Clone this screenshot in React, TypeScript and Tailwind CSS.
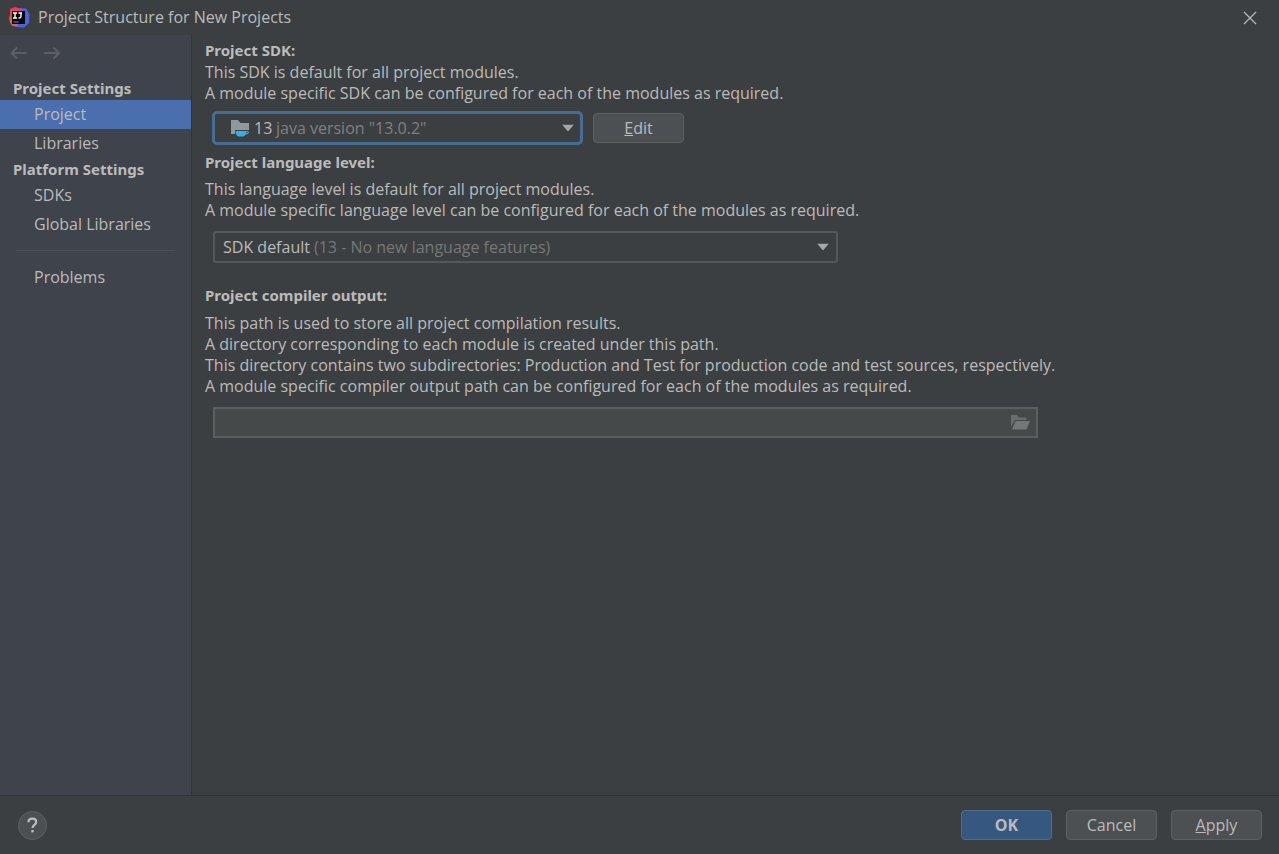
import React, { useState } from "react";

const HelpIcon = () => (
  <svg width="13" height="17" viewBox="0 0 13 17" fill="none" aria-hidden="true">
    <path
      d="M2.500 5.200C2.500 2.900 4.100 1.700 6.300 1.700s3.900 1.200 3.900 3.200c0 2.900-3.700 2.900-3.700 6"
      stroke="#bbbdbf"
      strokeWidth="2.2"
    />
    <rect x="5.3" y="13" width="2.4" height="2.4" fill="#bbbdbf" />
  </svg>
);

const Logo = () => (
  <svg width="22" height="22" viewBox="0 0 22 22" aria-hidden="true">
    <defs>
      <linearGradient id="logo-left" x1="0" y1="0" x2="0" y2="1">
        <stop offset="0" stopColor="#f0346b" />
        <stop offset="0.55" stopColor="#e8503f" />
        <stop offset="0.8" stopColor="#e8763a" />
        <stop offset="1" stopColor="#b94fa8" />
      </linearGradient>
      <linearGradient id="logo-right" x1="0" y1="0" x2="1" y2="1">
        <stop offset="0" stopColor="#a03fc8" />
        <stop offset="0.4" stopColor="#4a62e0" />
        <stop offset="1" stopColor="#5a5fd8" />
      </linearGradient>
    </defs>
    <path d="M11 1l7 .5L21.500 7 21 16l-5 4.500-9-.5 3-9z" fill="url(#logo-right)" />
    <path d="M2 2l5-2 6 2 1 4-5 13.500-5-.5-2-4-1-4 1-3z" fill="url(#logo-left)" />
    <rect x="4" y="4" width="13" height="13" fill="#09070a" />
    <path
      d="M5 6h4M7 6v5M5 11h4M10.500 6h3.500M13 6v3.600c0 1-.7 1.400-1.500 1.400h-1"
      stroke="#fff"
      strokeWidth="1.4"
      fill="none"
    />
    <path d="M5.500 15h5" stroke="#8a8a8a" strokeWidth="1" />
  </svg>
);

const Arrow = ({ back }: { back?: boolean }) => (
  <svg width="18" height="14" viewBox="0 0 18 14" fill="none" aria-hidden="true">
    <path
      d={back ? "M17.500 7H2.500M8 1.500L2.500 7 8 12.500" : "M1 7h15M10.500 1.500L16 7l-5.500 5.500"}
      stroke="#5c5f64"
      strokeWidth="2"
    />
  </svg>
);

const JdkIcon = () => (
  <svg width="20" height="18" viewBox="0 0 20 18" aria-hidden="true">
    <path d="M1 1h7l2.500 3H19v7H5v4H1z" fill="#8f999f" />
    <path d="M5.500 12h11c3.400 0 3.200 3.400-.8 3.400-.8 1.400-2 2.100-3.500 2.100H9.500c-2.500 0-4-2-4-5.500z" fill="#35b0e2" />
    <path d="M16.300 13h.9c.8 0 .6 1.300-.9 1.300z" fill="#3c3f41" />
  </svg>
);

const FolderIcon = () => (
  <svg width="19" height="15" viewBox="0 0 19 15" aria-hidden="true">
    <path d="M0 12V0h6l2 2.500h7.500V5H4z" fill="#696d6f" />
    <path d="M4.700 6H19l-3.500 8.500H1z" fill="#73777a" />
  </svg>
);

const Caret = () => (
  <svg
    className="pointer-events-none absolute right-[9px] top-1/2 -translate-y-1/2"
    width="12"
    height="7"
    viewBox="0 0 12 7"
    aria-hidden="true"
  >
    <path d="M0 0h12L6 7z" fill="#a5a7a9" />
  </svg>
);

const menu = [
  { title: "Project Settings", items: ["Project", "Libraries"] },
  { title: "Platform Settings", items: ["SDKs", "Global Libraries"] },
];

type NavItemProps = {
  label: string;
  active: boolean;
  onClick: () => void;
};

const NavItem = ({ label, active, onClick }: NavItemProps) => (
  <button
    onClick={onClick}
    className={`flex h-[29px] w-full items-center pl-[34px] text-left ${
      active ? "bg-[#4b6eaf]" : ""
    }`}
  >
    {label}
  </button>
);

const headingStyle = "block font-['Noto_Sans',sans-serif] text-[15px] font-bold";

const buttonStyle =
  "flex h-[30px] w-[91px] items-center justify-center rounded-[4px] border";

const App = () => {
  const [selected, setSelected] = useState("Project");
  const [output, setOutput] = useState("");

  return (
    <div className="flex min-h-screen flex-col bg-[#3c3f41] font-['Open_Sans',sans-serif] text-[16px] leading-[21px] text-[#bbbbbb]">
      {/* title bar */}
      <header className="flex h-[35px] items-center gap-2 pl-2 pr-[22px]">
        <Logo />
        <h1 className="flex-1">Project Structure for New Projects</h1>
        <button aria-label="Close">
          <svg width="14" height="14" viewBox="0 0 14 14" aria-hidden="true">
            <path d="M1 1l12 12M13 1L1 13" stroke="#b5b7b8" strokeWidth="1.300" />
          </svg>
        </button>
      </header>

      <div className="flex flex-1">
        <nav className="w-48 shrink-0 border-r border-[#313335] bg-[#3f434c]">
          <div className="flex h-[42px] items-start gap-4 pl-[9px] pt-[11px]">
            <button aria-label="Back">
              <Arrow back />
            </button>
            <button aria-label="Forward">
              <Arrow />
            </button>
          </div>
          {menu.map(({ title, items }) => (
            <div key={title}>
              <h2 className={`${headingStyle} h-[23px] pl-[13px] leading-[23px]`}>{title}</h2>
              {items.map((label) => (
                <NavItem
                  key={label}
                  label={label}
                  active={selected === label}
                  onClick={() => setSelected(label)}
                />
              ))}
            </div>
          ))}
          <hr className="mx-4 mb-3 mt-[11px] border-[#4b4f56]" />
          <NavItem
            label="Problems"
            active={selected === "Problems"}
            onClick={() => setSelected("Problems")}
          />
        </nav>

        <main className="min-w-0 flex-1 px-[13px] pt-[5px]">
          {/* SDK */}
          <label htmlFor="sdk" className={headingStyle}>
            Project SDK:
          </label>
          <p className="mt-px">
            This SDK is default for all project modules.
            <br />
            A module specific SDK can be configured for each of the modules as required.
          </p>
          <div className="mt-[7px] flex items-center gap-[10px] pl-[7px]">
            <div className="relative w-[371px]">
              <select
                id="sdk"
                className="block h-[34px] w-full appearance-none rounded-[5px] border-3 border-[#466d94] bg-[#3c3f41] pl-[39px] outline-none"
              >
                <option>13</option>
              </select>
              <div className="pointer-events-none absolute inset-y-0 left-[18px] flex items-center">
                <JdkIcon />
                <span className="pl-[26px] text-[#808080]">java version "13.0.2"</span>
              </div>
              <Caret />
            </div>
            <button className={`${buttonStyle} border-[#5e6060] bg-[#4c5052]`}>
              <span>
                <u>E</u>dit
              </span>
            </button>
          </div>

          {/* language level */}
          <label htmlFor="level" className={`${headingStyle} mt-[7px]`}>
            Project language level:
          </label>
          <p className="mt-[6px]">
            This language level is default for all project modules.
            <br />
            A module specific language level can be configured for each of the modules as required.
          </p>
          <div className="relative ml-2 mt-[10px] w-[625px]">
            <select
              id="level"
              className="block h-8 w-full appearance-none rounded-[3px] border-2 border-[#54585a] bg-[#3c3f41] pl-2 outline-none"
            >
              <option>SDK default</option>
            </select>
            <span className="pointer-events-none absolute inset-y-0 left-[101px] flex items-center text-[#777777]">
              (13 - No new language features)
            </span>
            <Caret />
          </div>

          {/* compiler output */}
          <label htmlFor="output" className={`${headingStyle} mt-[22px]`}>
            Project compiler output:
          </label>
          <p className="mt-[7px]">
            This path is used to store all project compilation results.
            <br />
            A directory corresponding to each module is created under this path.
            <br />
            This directory contains two subdirectories: Production and Test for production code and test sources, respectively.
            <br />
            A module specific compiler output path can be configured for each of the modules as required.
          </p>
          <div className="ml-2 mt-[10px] flex h-[31px] w-[825px] items-center border-2 border-[#5b5f61] bg-[#45494a] pr-[6px]">
            <input
              id="output"
              value={output}
              onChange={(e) => setOutput(e.target.value)}
              className="min-w-0 flex-1 bg-transparent px-2 outline-none"
            />
            <button aria-label="Browse">
              <FolderIcon />
            </button>
          </div>
        </main>
      </div>

      <footer className="flex h-[59px] items-center justify-between border-t border-[#323537] pl-[18px] pr-[17px]">
        <button
          aria-label="Help"
          className="flex size-[29px] items-center justify-center rounded-full border border-[#5e6162] bg-[#4c5052]"
        >
          <HelpIcon />
        </button>
        <div className="flex gap-[14px]">
          <button className={`${buttonStyle} border-[#4c708c] bg-[#365880] font-bold`}>OK</button>
          <button className={`${buttonStyle} border-[#5e6060] bg-[#4c5052]`}>Cancel</button>
          <button className={`${buttonStyle} border-[#5e6060] bg-[#4c5052]`}>
            <span>
              <u>A</u>pply
            </span>
          </button>
        </div>
      </footer>
    </div>
  );
};

export default App;
